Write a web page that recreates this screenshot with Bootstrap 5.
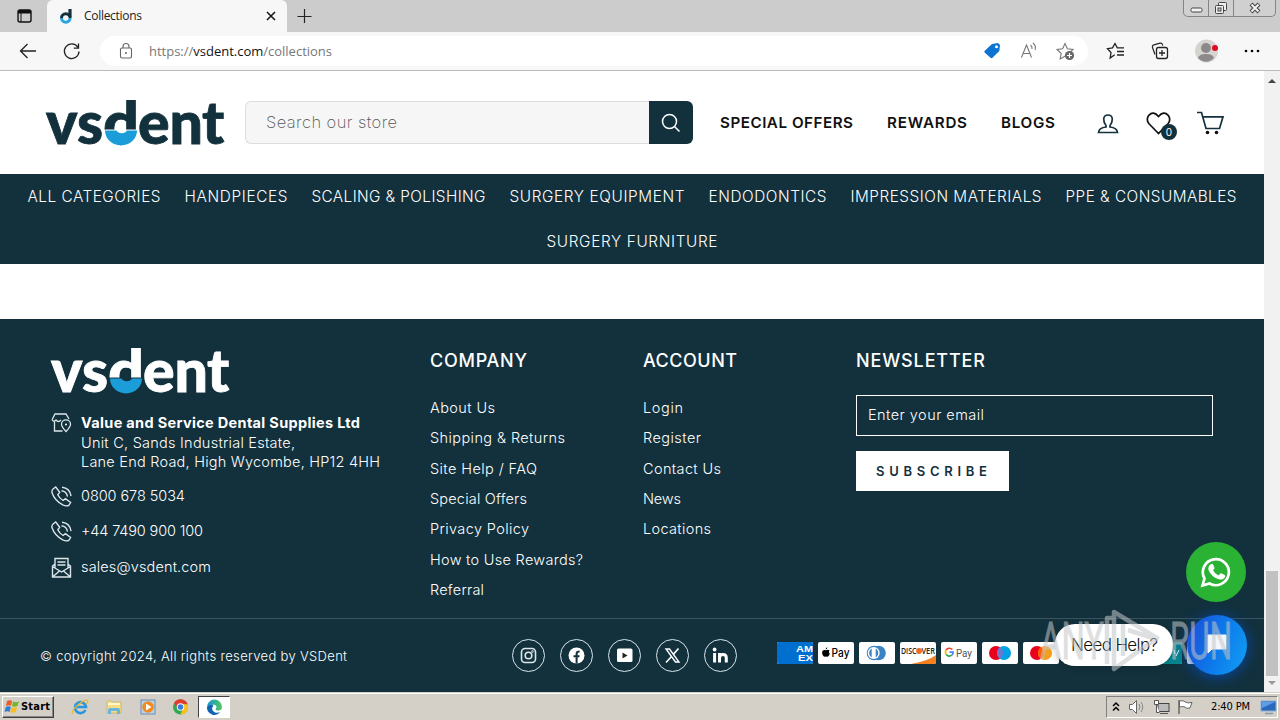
<!DOCTYPE html>
<html lang="en">
<head>
    <meta charset="UTF-8">
    <meta name="viewport" content="width=device-width, initial-scale=1.0">
    <link href="https://cdn.jsdelivr.net/npm/bootstrap@5.3.0/dist/css/bootstrap.min.css" rel="stylesheet">
    <title>Collections</title>
    <style>
        :root { --navy: #12313d; --sky: #1b9dd9; }
        body { width: 1280px; height: 720px; overflow: hidden; font-family: Inter, sans-serif; font-size: 14.5px; line-height: 20px; color: #111; }
        svg { display: block; flex: none; }
        a { color: inherit; text-decoration: none; }
        .fit { white-space: nowrap; display: inline-block; flex: none; }
        .ui { font-family: "Open Sans", "Noto Sans", sans-serif; }

        /* browser frame */
        .tab-strip { height: 32px; background: #ccc; padding-left: 16px; }
        .browser-tab { width: 240px; height: 32px; background: #f7f7f7; border-radius: 6px 6px 0 0; margin-left: 15px; padding: 0 10px 0 12px; font-size: 12px; color: #222; }
        .win-buttons { width: 93px; height: 17px; margin-right: 4px; border: 1px solid #858585; border-top: 0; border-radius: 0 0 5px 5px; background: #d0d0d0; }
        .win-buttons > div { border-right: 1px solid #858585; }
        .win-buttons > div:last-child { border: 0; }
        .tool-row { height: 39px; background: #f7f7f7; border-bottom: 1px solid #bbb; padding-left: 19px; }
        .address { width: 988px; height: 30px; background: #fff; border-radius: 15px; margin-left: 19px; padding: 0 13px 0 18px; font-size: 13px; color: #777; }
        .address b { font-weight: 400; color: #111; }

        /* store */
        .viewport-area { height: 621px; }
        .store { width: 1264px; }
        .store-header { height: 103px; padding-left: 45px; background: #fff; }
        .search { width: 448px; height: 43px; margin-left: 19px; }
        .search-field { background: #f6f6f6; border: 1px solid #ddd; border-right: 0; border-radius: 6px 0 0 6px; padding: 0 0 2px 20px; font-size: 16.5px; font-weight: 200; color: #555; }
        .search-btn { width: 44px; background: var(--navy); border-radius: 0 6px 6px 0; }
        .top-links { margin-left: 27px; gap: 34px; font-size: 15.2px; font-weight: 600; }
        .wish-count { width: 16px; height: 16px; right: -6px; bottom: -5px; background: var(--navy); color: #fff; font-size: 10px; line-height: 16px; text-align: center; border-radius: 50%; }
        .category-bar { height: 90px; background: var(--navy); color: #fff; column-gap: 24px; font-size: 15.3px; font-weight: 300; align-content: flex-start; }
        .category-bar a { line-height: 45px; height: 45px; }
        .gap-band { height: 55px; background: #fff; }

        .store-footer { height: 373px; background: var(--navy); color: #fff; font-weight: 300; }
        .footer-main { height: 300px; padding: 29px 51px 0 50px; border-bottom: 1px solid #3b5560; }
        .col-contact { width: 380px; }
        .col-links { width: 213px; }
        .col-links h2, .col-news h2 { font-size: 18px; font-weight: 500; line-height: 24px; margin: 1px 0 22px; }
        .col-links ul li { height: 30.35px; line-height: 26px; }
        .col-news { width: 357px; }
        .email-box { height: 41px; border: 1px solid #fff; padding: 0 11px 2px; }
        .subscribe { width: 153px; height: 40px; margin-top: 15px; background: #fff; color: var(--navy); font-size: 13px; font-weight: 600; padding-left: 20px; }
        .contact-row { gap: 10px; }
        .contact-row > svg { margin-left: 1px; margin-right: -1px; }
        .contact-row b { font-weight: 700; }
        .footer-base { height: 73px; padding-left: 40px; font-size: 13px; }
        .social { gap: 15px; margin-left: 165px; }
        .social a { width: 33px; height: 33px; border: 1px solid #dbe5e9; border-radius: 50%; }
        .payments { gap: 5px; margin-left: 40px; margin-top: -5px; }
        .payments svg { width: 36px; height: 22px; border-radius: 2px; background: #fff; }

        .scroll-rail { width: 16px; background: #f1f1f1; padding: 7px 2px 6px; }
        .scroll-thumb { width: 12px; height: 105px; background: #c1c1c1; margin-top: auto; margin-bottom: 5px; }

        /* floating help */
        .wa-button { left: 1186px; top: 542px; width: 60px; height: 60px; background: #2ab234; }
        .chat-button { left: 1187px; top: 615px; width: 60px; height: 60px; background: linear-gradient(110deg, #1d4ed8 5%, #0c78ea 50%, #12a0f4); box-shadow: 0 2px 14px #0848ad; }
        .help-pill { left: 1055px; top: 624px; width: 118px; height: 42px; background: #fff; color: #111; border-radius: 20px; padding-left: 16px; font-size: 17px; font-weight: 300; box-shadow: 0 1px 8px rgba(0,0,0,.2); }
        .watermark { left: 1036px; top: 600px; }

        /* taskbar */
        .taskbar { height: 28px; background: #d4d0c8; border-top: 1px solid #d4d0c8; box-shadow: inset 0 1px #fff; padding: 1px 2px 0; font-family: "DejaVu Sans Condensed", "DejaVu Sans", sans-serif; font-size: 11px; color: #000; }
        .start-btn { width: 52px; height: 22px; border: 1px solid; border-color: #fff #404040 #404040 #fff; box-shadow: inset -1px -1px #888; padding-left: 1px; font-weight: 700; }
        .task-icons { margin-left: 17px; gap: 15.8px; }
        .task-active { width: 32px; height: 22px; margin-left: 9px; background: #fff; border: 1px solid; border-color: #404040 #fff #fff #404040; }
        .tray { width: 172px; height: 22px; border: 1px solid; border-color: #808080 #fff #fff #808080; padding: 0 0 0 5px; }
    </style>
</head>
<body class="d-flex flex-column position-relative">
    <!-- tabs -->
    <div class="tab-strip d-flex align-items-center ui">
        <svg width="16" height="16" viewBox="0 0 16 16"><rect x="2" y="2" width="13" height="12" rx="2" fill="none" stroke="#111" stroke-width="1.4"/><path d="M2 2h13v3.5H2z" fill="#111"/><path d="M5 5v9" stroke="#111"/></svg>
        <div class="browser-tab d-flex align-items-center">
            <svg width="14" height="16" viewBox="0 0 14 16"><path d="M11 1v8" stroke="#14313d" stroke-width="3.2"/><path d="M2.5 10a4.3 4.3 0 0 1 8.6 0" fill="none" stroke="#14313d" stroke-width="3"/><path d="M2.5 10a4.3 4.3 0 0 0 8.6 0" fill="none" stroke="#27a5de" stroke-width="3"/></svg>
            <span class="fit" data-w="58" style="margin-left:11px">Collections</span>
            <svg class="ms-auto" width="12" height="12" viewBox="0 0 12 12"><path d="M2 2l8 8M10 2l-8 8" stroke="#111" stroke-width="1.5"/></svg>
        </div>
        <svg class="ms-2" width="18" height="18" viewBox="0 0 18 18"><path d="M9.500 2v14M2.500 9.500h14" stroke="#222" stroke-width="1.2"/></svg>
        <div class="win-buttons d-flex ms-auto align-self-start">
            <div style="width:25px"><svg width="24" height="16"><rect x="7" y="8" width="11" height="4" rx="1.500" fill="#f2f2f2" stroke="#444"/></svg></div>
            <div style="width:25px"><svg width="24" height="16"><rect x="9.500" y="2.500" width="8" height="8" rx="1" fill="#eee" stroke="#444"/><rect x="6.500" y="5.500" width="8" height="8" rx="1" fill="#eee" stroke="#444"/><rect x="9" y="8" width="3" height="3" fill="#ccc" stroke="#444"/></svg></div>
            <div><svg width="40" height="16"><path d="M17 4l8 8M25 4l-8 8" stroke="#444" stroke-width="4"/><path d="M17.500 4.500l7 7M24.500 4.500l-7 7" stroke="#f2f2f2" stroke-width="2"/></svg></div>
        </div>
    </div>

    <!-- address row -->
    <div class="tool-row d-flex align-items-center ui">
        <svg width="18" height="18" viewBox="0 0 18 18"><path d="M17 9H1.500M8.500 2l-7 7 7 7" fill="none" stroke="#222" stroke-width="1.300"/></svg>
        <svg style="margin-left:25px" width="19" height="19" viewBox="0 0 19 19"><path d="M15.800 5.200A7.300 7.300 0 1 0 17 9.500M16.500 1.500v4.700h-4.700" fill="none" stroke="#222" stroke-width="1.300"/></svg>
        <div class="address d-flex align-items-center">
            <svg width="16" height="18" viewBox="0 0 16 18"><rect x="2.500" y="6" width="11" height="10" rx="1.500" fill="none" stroke="#666" stroke-width="1.100"/><path d="M5 6V4.500a3 3 0 0 1 6 0V6" fill="none" stroke="#666" stroke-width="1.100"/><circle cx="8" cy="11" r="1" fill="#666"/></svg>
            <span class="fit" data-w="183" style="margin-left:15px">https://<b>vsdent.com</b>/collections</span>
            <svg class="ms-auto" width="18" height="18" viewBox="0 0 18 18"><path d="M2 8.500l7-6.500 6-1 2 2-.7 6-6.800 6.800q-1 .8-2 0L1.700 10.500q-.7-1 .3-2z" fill="#0b73d2"/><circle cx="13.500" cy="4.700" r="1.500" fill="#fff"/></svg>
            <svg style="margin-left:19px" width="18" height="18" viewBox="0 0 18 18"><path d="M1.500 15.500L6.500 3l5 12.500M3.200 11.500h6.600M10.500 3q2 1.500 1.500 4M13 1q3.500 3 2 7" fill="none" stroke="#777" stroke-width="1.100"/></svg>
            <svg style="margin-left:18px" width="19" height="19" viewBox="0 0 19 19"><path d="M9 14.300L4.200 17l1-5.500L1 7.500l5.600-.8L9 1.500l2.400 5.200 5.600.8-2 2" fill="none" stroke="#777" stroke-width="1.100"/><circle cx="13.500" cy="13.500" r="4.600" fill="#666"/><path d="M13.500 11v5M11 13.500h5" stroke="#fff" stroke-width="1.200"/></svg>
        </div>
        <svg style="margin-left:18px" width="19" height="18" viewBox="0 0 19 18"><path d="M8.700 12.800L4.200 16l.8-5.500L1.500 6.600l5-.7L9 1.500l2.300 4.400H18M11 9.500h7M11 13h7" fill="none" stroke="#222" stroke-width="1.300"/></svg>
        <svg style="margin-left:26px" width="18" height="18" viewBox="0 0 18 18"><path d="M4 12.500L1.500 5.500Q1 3.500 3 2.800l6-1.600q2-.4 2.500 1.500l.3 1" fill="none" stroke="#222" stroke-width="1.200"/><rect x="5.500" y="5.500" width="11" height="11" rx="2" fill="#f7f7f7" stroke="#222" stroke-width="1.300"/><path d="M11 8v6M8 11h6" stroke="#222" stroke-width="1.300"/></svg>
        <svg style="margin-left:26px" width="24" height="24" viewBox="0 0 24 24"><circle cx="11.500" cy="12" r="11.500" fill="#d6d4d0"/><circle cx="11" cy="9" r="5" fill="#8d898a"/><path d="M3 19q1-4 8-4t8 4q-8 7.500-16 0z" fill="#8d898a"/><circle cx="20" cy="9" r="3" fill="#e00b1c"/></svg>
        <svg style="margin-left:25px" width="16" height="4" viewBox="0 0 16 4"><circle cx="2" cy="2" r="1.300"/><circle cx="8" cy="2" r="1.300"/><circle cx="14" cy="2" r="1.300"/></svg>
    </div>

    <!-- shared symbols -->
    <svg width="0" height="0" class="position-absolute">
        <defs>
            <clipPath id="upper"><path d="M0 0h180v29.500H0z"/></clipPath>
            <symbol id="logo" viewBox="0 0 180 46">
                <g font-family="Lato, sans-serif" font-weight="900" font-size="59" fill="currentColor" stroke="currentColor" stroke-width=".8">
                    <text x="1 32" y="44">vs</text>
                    <text x="58" y="44" textLength="36" lengthAdjust="spacingAndGlyphs" clip-path="url(#upper)">d</text>
                    <text x="93 124.500 157" y="44">ent</text>
                </g>
                <path d="M60 30.500H71.500a5.800 4.800 0 0 0 10.500 0H92A16 15 0 0 1 60 30.500z" fill="#1b9dd9"/>
            </symbol>
            <symbol id="phone" viewBox="0 0 20 20">
                <path d="M2.200 2.600L4.500 1l3.800 5-1.800 2.300q1.500 3.400 5 5.500l2.200-1.800 5 3.700-1.500 2.500q-2.200 1.600-6-.2Q3.500 14 1 6.500q-.6-2.500 1.200-3.900zM10 4.500q5 .5 5.700 5.700M10.500 1.200q7.500.8 8.600 8.500" fill="none" stroke="#dce6ea" stroke-width="1.300"/>
            </symbol>
        </defs>
    </svg>

    <div class="viewport-area d-flex">
        <div class="store">
            <header class="store-header d-flex align-items-center">
                <svg width="180" height="46" style="color:#12313d"><use href="#logo"/></svg>
                <div class="search d-flex" style="margin-left:20px">
                    <div class="search-field flex-grow-1 d-flex align-items-center"><span class="fit" data-w="131">Search our store</span></div>
                    <div class="search-btn d-flex align-items-center justify-content-center">
                        <svg width="20" height="20" viewBox="0 0 20 20"><circle cx="8.500" cy="8.500" r="7" fill="none" stroke="#fff" stroke-width="1.500"/><path d="M13.500 13.500l5 5" stroke="#fff" stroke-width="1.500"/></svg>
                    </div>
                </div>
                <nav class="top-links d-flex">
                    <a href="#" class="fit" data-w="133">SPECIAL OFFERS</a>
                    <a href="#" class="fit" data-w="80">REWARDS</a>
                    <a href="#" class="fit" data-w="54">BLOGS</a>
                </nav>
                <svg style="margin-left:42px" width="22" height="22" viewBox="0 0 22 22"><path d="M9 13.500Q6.700 11 6.700 7 7 3 11 3t4.300 4q0 4-2.300 6.500v1.500q7 .8 7.500 5.500h-19q.5-4.700 7.500-5.500z" fill="none" stroke="#14313d" stroke-width="1.700"/></svg>
                <div class="position-relative" style="margin-left:27px">
                    <svg width="25" height="24" viewBox="0 0 25 24"><path d="M12.500 22.500L3 12.800Q-.3 8.500 2.800 4.300 7.500-.5 12.500 5.500 17.500-.5 22.200 4.300q3.100 4.200-.2 8.500z" fill="none" stroke="#111" stroke-width="1.700"/></svg>
                    <span class="wish-count position-absolute">0</span>
                </div>
                <svg style="margin-left:25px" width="28" height="26" viewBox="0 0 28 26"><path d="M1 2.500h4.500L10 18.500h13.500L27 6.800H6.800" fill="none" stroke="#14313d" stroke-width="1.700"/><circle cx="11.500" cy="22.500" r="1.800" fill="#111"/><circle cx="20.500" cy="22.500" r="1.800" fill="#111"/></svg>
            </header>

            <nav class="category-bar d-flex flex-wrap justify-content-center">
                <a href="#" class="fit" data-w="133">ALL CATEGORIES</a>
                <a href="#" class="fit" data-w="103">HANDPIECES</a>
                <a href="#" class="fit" data-w="174">SCALING &amp; POLISHING</a>
                <a href="#" class="fit" data-w="175">SURGERY EQUIPMENT</a>
                <a href="#" class="fit" data-w="118">ENDODONTICS</a>
                <a href="#" class="fit" data-w="191">IMPRESSION MATERIALS</a>
                <a href="#" class="fit" data-w="171">PPE &amp; CONSUMABLES</a>
                <a href="#" class="fit" data-w="171">SURGERY FURNITURE</a>
            </nav>
            <div class="gap-band"></div>

            <footer class="store-footer">
                <div class="footer-main d-flex">
                    <div class="col-contact">
                        <svg width="180" height="46"><use href="#logo"/></svg>
                        <div class="contact-row d-flex" style="margin-top:19px">
                            <svg width="21" height="20" viewBox="0 0 21 20"><path d="M3.500 8.500V18h8M1.200 6.500L4 1h11l3 5M1 6.500q1.500 3.200 4 .5 2.300 3 5 0" fill="none" stroke="#dce6ea" stroke-width="1.300"/><path d="M15 18.500q-4.500-5-4.500-7.300a4.500 4.300 0 0 1 9 0q0 2.300-4.500 7.300z" fill="none" stroke="#dce6ea" stroke-width="1.300"/><circle cx="15" cy="11.500" r="1" fill="#fff"/></svg>
                            <div style="line-height:19.500px">
                                <b class="fit" data-w="279">Value and Service Dental Supplies Ltd</b><br>
                                <span class="fit" data-w="214">Unit C, Sands Industrial Estate,</span><br>
                                <span class="fit" data-w="299">Lane End Road, High Wycombe, HP12 4HH</span>
                            </div>
                        </div>
                        <div class="contact-row d-flex" style="margin-top:14px"><svg width="21" height="21"><use href="#phone"/></svg><span class="fit" data-w="104">0800 678 5034</span></div>
                        <div class="contact-row d-flex" style="margin-top:14px"><svg width="21" height="21"><use href="#phone"/></svg><span class="fit" data-w="122">+44 7490 900 100</span></div>
                        <div class="contact-row d-flex" style="margin-top:15px"><svg width="21" height="21" viewBox="0 0 21 21"><path d="M4 7L1.500 9v11h18V9L17 7M4 11.500V1.500h13v10M6.500 5h8M6.500 8h8M1.500 9.500l9 5.500 9-5.500M1.500 20l7-6M19.500 20l-7-6" fill="none" stroke="#dce6ea" stroke-width="1.400"/></svg><span class="fit" data-w="130">sales@vsdent.com</span></div>
                    </div>
                    <div class="col-links">
                        <h2><span class="fit" data-w="97">COMPANY</span></h2>
                        <ul class="list-unstyled">
                            <li><a href="#" class="fit" data-w="65">About Us</a></li>
                            <li><a href="#" class="fit" data-w="135">Shipping &amp; Returns</a></li>
                            <li><a href="#" class="fit" data-w="107">Site Help / FAQ</a></li>
                            <li><a href="#" class="fit" data-w="97">Special Offers</a></li>
                            <li><a href="#" class="fit" data-w="99">Privacy Policy</a></li>
                            <li><a href="#" class="fit" data-w="153">How to Use Rewards?</a></li>
                            <li><a href="#" class="fit" data-w="54">Referral</a></li>
                        </ul>
                    </div>
                    <div class="col-links">
                        <h2><span class="fit" data-w="94">ACCOUNT</span></h2>
                        <ul class="list-unstyled">
                            <li><a href="#" class="fit" data-w="40">Login</a></li>
                            <li><a href="#" class="fit" data-w="58">Register</a></li>
                            <li><a href="#" class="fit" data-w="78">Contact Us</a></li>
                            <li><a href="#" class="fit" data-w="38">News</a></li>
                            <li><a href="#" class="fit" data-w="68">Locations</a></li>
                        </ul>
                    </div>
                    <div class="col-news">
                        <h2><span class="fit" data-w="129">NEWSLETTER</span></h2>
                        <div class="email-box d-flex align-items-center"><span class="fit" data-w="116">Enter your email</span></div>
                        <div class="subscribe d-flex align-items-center"><span class="fit" data-w="111">SUBSCRIBE</span></div>
                    </div>
                </div>
                <div class="footer-base d-flex align-items-center">
                    <span class="fit" data-w="307">© copyright 2024, All rights reserved by VSDent</span>
                    <div class="social d-flex">
                        <a href="#" class="d-flex align-items-center justify-content-center"><svg width="17" height="17" viewBox="0 0 17 17" fill="none" stroke="#dce6ea" stroke-width="1.600"><rect x="1.500" y="1.500" width="14" height="14" rx="3.500"/><circle cx="8.500" cy="8.500" r="3.300"/><circle cx="12.500" cy="4.500" r=".4"/></svg></a>
                        <a href="#" class="d-flex align-items-center justify-content-center"><svg width="17" height="17" viewBox="0 0 17 17"><circle cx="8.500" cy="8.500" r="8" fill="#fff"/><path d="M8.600 16.500V6.800q0-2.300 3-2.300M5.500 9.300h6" fill="none" stroke="#14313d" stroke-width="2"/></svg></a>
                        <a href="#" class="d-flex align-items-center justify-content-center"><svg width="17" height="17" viewBox="0 0 17 17"><rect x="1" y="1.500" width="15.500" height="13.500" rx="1.500" fill="#fff"/><path d="M6.500 5.500l5 3-5 3z" fill="#222"/></svg></a>
                        <a href="#" class="d-flex align-items-center justify-content-center"><svg width="17" height="17" viewBox="0 0 17 17" fill="none" stroke="#fff"><path d="M2 2h3.500l9.500 13h-3.500z" stroke-width="1.400"/><path d="M14.500 1.500L9.300 7.400M7.500 9.500L2 15.500" stroke-width="1.600"/></svg></a>
                        <a href="#" class="d-flex align-items-center justify-content-center"><svg width="17" height="17" viewBox="0 0 17 17"><circle cx="2.600" cy="2.500" r="1.900" fill="#fff"/><path d="M2.600 6v9.500M7.500 6v9.500M7.500 11q0-3.500 3.500-3.500 3.300 0 3.300 3.500v4.500" fill="none" stroke="#fff" stroke-width="3"/></svg></a>
                    </div>
                    <div class="payments d-flex">
                        <svg viewBox="0 0 36 22"><path d="M0 0h36v22H0z" fill="#016fd0"/><g font-family="Liberation Sans, sans-serif" font-weight="700" font-size="9" fill="#fff"><text x="19" y="10" textLength="17" lengthAdjust="spacingAndGlyphs">AM</text><text x="21" y="18.500" textLength="15" lengthAdjust="spacingAndGlyphs">EX</text></g></svg>
                        <svg viewBox="0 0 36 22"><path d="M8 8.300q2-1.300 3.500.3-1.600 1.400.3 3.200-1.200 3.400-2.700 2.900-1-.4-2 0-1.400.4-2.700-2.200Q3.500 9 5.500 8.200q1.200-.5 2.500.1zM7.600 7.500q.1-1.800 1.800-2.200 0 1.800-1.800 2.200z"/><text x="13.500" y="14.800" font-family="Inter, sans-serif" font-size="11.500" font-weight="500" textLength="18" lengthAdjust="spacingAndGlyphs">Pay</text></svg>
                        <svg viewBox="0 0 36 22"><circle cx="19.500" cy="11" r="7.300" fill="#3a83c5"/><circle cx="15" cy="11" r="7.300" fill="#3a83c5"/><circle cx="14.700" cy="11" r="6" fill="#fff"/><path d="M12.700 6.500a5.200 5.200 0 0 0 0 9zM16.700 6.500a5.200 5.200 0 0 1 0 9z" fill="#3a83c5"/></svg>
                        <svg viewBox="0 0 36 22"><path d="M36 13v9H11q17-3 25-9z" fill="#f48120"/><g font-family="Open Sans, sans-serif" font-weight="600" font-size="8" fill="#222"><text x="1" y="11.800" textLength="15.500" lengthAdjust="spacingAndGlyphs">DISC</text><text x="21.500" y="11.800" textLength="13.500" lengthAdjust="spacingAndGlyphs">VER</text></g><circle cx="19" cy="9" r="2.900" fill="#f06a1f"/></svg>
                        <svg viewBox="0 0 36 22"><g fill="none" stroke-width="1.700"><path d="M11.300 7.500A3.900 3.900 0 0 0 5.200 8" stroke="#ea4335"/><path d="M5.200 8a3.900 3.900 0 0 0 0 4.500" stroke="#fbbc04"/><path d="M5.200 12.500a3.900 3.900 0 0 0 5.600.7" stroke="#34a853"/><path d="M10.800 13.200q1.500-1.300 1.300-3H8.500" stroke="#4285f4"/></g><text x="15" y="14.800" font-family="Roboto, sans-serif" font-size="11.500" font-weight="400" fill="#555" textLength="16" lengthAdjust="spacingAndGlyphs">Pay</text></svg>
                        <svg viewBox="0 0 36 22"><circle cx="14" cy="11" r="7" fill="#eb001b"/><circle cx="22" cy="11" r="7" fill="#00a2e5"/><path d="M18 5.300a7 7 0 0 1 0 11.400 7 7 0 0 1 0-11.400z" fill="#7375cf"/></svg>
                        <svg viewBox="0 0 36 22"><circle cx="14" cy="11" r="7" fill="#eb001b"/><circle cx="22" cy="11" r="7" fill="#f79e1b"/><path d="M18 5.300a7 7 0 0 1 0 11.400 7 7 0 0 1 0-11.400z" fill="#ff5f00"/></svg>
                        <svg viewBox="0 0 36 22"></svg>
                        <svg viewBox="0 0 36 22"></svg>
                        <svg viewBox="0 0 36 22"><path d="M0 0h36v22H0z" fill="#07868e"/><path d="M28 8l1 4M33 8l-3 6" stroke="#fff"/></svg>
                        <svg viewBox="0 0 36 22"></svg>
                    </div>
                </div>
            </footer>
        </div>
        <div class="scroll-rail d-flex flex-column align-items-center">
            <svg width="10" height="5"><path d="M1 5l4-4 4 4z" fill="#444"/></svg>
            <div class="scroll-thumb"></div>
            <svg width="10" height="5"><path d="M1 0l4 4 4-4z" fill="#999"/></svg>
        </div>
    </div>

    <div class="taskbar d-flex align-items-center">
        <div class="start-btn d-flex align-items-center">
            <svg width="16" height="16" viewBox="0 0 16 16"><path d="M3 2q3-1.500 5 0L7 7Q5 5.500 2 7z" fill="#ee5b2c"/><path d="M9 2.500q3 1.500 6 0L13.500 7q-3 1.500-5.500 0z" fill="#74b72b"/><path d="M1.800 8q3-1.500 5 0L5.500 13q-2-1.500-5 0z" fill="#2f7fd4"/><path d="M7.700 8q3 1.500 5.500 0l-1.500 5q-3 1.500-5.500 0z" fill="#f8bd20"/></svg>
            <span class="fit" data-w="29" style="margin-left:1px">Start</span>
        </div>
        <div class="task-icons d-flex align-items-center">
            <svg width="18" height="18" viewBox="0 0 18 18"><path d="M14.500 12a5.500 5.500 0 1 1 .5-3H5" fill="none" stroke="#2c96dd" stroke-width="2.600"/><path d="M2 15.500q-3-1.500 4.500-8T16.500 2.500q1 1-1 3.500" fill="none" stroke="#e9b830" stroke-width="1.300"/></svg>
            <svg width="18" height="18" viewBox="0 0 18 18"><path d="M2 4l3-2 2 2h9v11H2z" fill="#f4df88" stroke="#c8ad55" stroke-width=".7"/><path d="M3 6h12" stroke="#fff8cf" stroke-width="2"/><path d="M3 16v-4q0-2 2-2h8q2 0 2 2v4h-3v-3H6v3z" fill="#69b5dd"/></svg>
            <svg width="18" height="18" viewBox="0 0 18 18"><rect x="2" y="2" width="14" height="14" fill="#b9d3e9" stroke="#688caf"/><circle cx="9" cy="9" r="5.800" fill="#f28a1d"/><path d="M7 5.500l5.500 3.500L7 12.500z" fill="#fff"/></svg>
            <svg width="17" height="18" viewBox="0 0 18 18"><circle cx="9" cy="9" r="8" fill="#33a853"/><path d="M2 5a8 8 0 0 1 14.500 1H9l-3 4z" fill="#e33b2e"/><path d="M16.500 6A8 8 0 0 1 9 17l3.500-8L9 6z" fill="#fbc116"/><circle cx="9" cy="9" r="4" fill="#fff"/><circle cx="9" cy="9" r="3" fill="#3a7de0"/></svg>
        </div>
        <div class="task-active d-flex align-items-center justify-content-center">
            <svg width="17" height="17" viewBox="0 0 17 17"><defs><linearGradient id="edge"><stop stop-color="#1b8fd8"/><stop offset="1" stop-color="#51ca5c"/></linearGradient></defs><path d="M1 8A7.500 7.500 0 0 1 16 8q0 3.500-4 3.500-2.500 0-2.500-1.200Q12 7 8.500 5.800 4 5 1 8z" fill="url(#edge)"/><path d="M1 8q3-3.500 6.500-1.500Q4 11 9 13.500q3 1 5.500-.7A7.500 7.500 0 0 1 1 8z" fill="#1264b3"/></svg>
        </div>
        <div class="tray d-flex align-items-center ms-auto">
            <svg width="8" height="12" viewBox="0 0 8 12"><path d="M1 5l3-3 3 3M1 9.500l3-3 3 3" fill="none" stroke="#000" stroke-width="1.500"/></svg>
            <svg style="margin-left:8px" width="18" height="16" viewBox="0 0 18 16"><path d="M1.500 5.500h3l4-4v13l-4-4h-3z" fill="#fff" stroke="#666"/><path d="M11 5q2 3 0 6M13 3q3.500 5 0 10" fill="none" stroke="#888"/></svg>
            <svg style="margin-left:7px" width="17" height="16" viewBox="0 0 17 16"><rect x="5" y="4.500" width="11" height="8" fill="#bbb" stroke="#444"/><path d="M1.500 1.500h4v4h-4zM3.500 5.500v8h3M7 14.500h8" fill="#fff" stroke="#555"/></svg>
            <svg style="margin-left:7px" width="17" height="16" viewBox="0 0 17 16"><path d="M2 1v14" stroke="#555" stroke-width="1.300"/><path d="M2.500 2q4-1 6 1 2 1.500 6.500.5L13 9Q9 10 8 8 6 7 2.500 8z" fill="#fff" stroke="#666"/></svg>
            <span class="fit ms-auto" data-w="39">2:40 PM</span>
            <svg style="margin-left:10px" width="17" height="16" viewBox="0 0 17 16"><rect x="1" y="2" width="15" height="10" fill="#2869be" stroke="#8daed4"/><path d="M2 3h13L2 9z" fill="#5d9de3"/><path d="M5 14.500h8" stroke="#89a" stroke-width="1.500"/></svg>
        </div>
    </div>

    <!-- floating buttons -->
    <div class="wa-button position-absolute rounded-circle d-flex align-items-center justify-content-center">
        <svg width="32" height="32" viewBox="0 0 32 32"><path d="M2.500 29.500l2-7A13 13 0 1 1 9.500 27.500z" fill="none" stroke="#fff" stroke-width="2.700"/><path d="M10.500 8.500q1.800-1.500 2.700.2l1.300 3q.2 1-1.500 2.500 2 3.700 5.600 5.300l1.700-2q.6-.5 1.500-.1l3 1.600q1 .8-.3 3-2.500 2.600-6.500 1-6.800-2.500-9.500-9-.8-3.500 2-5.500z" fill="#fff"/></svg>
    </div>
    <div class="help-pill position-absolute d-flex align-items-center"><span class="fit" data-w="87">Need Help?</span></div>
    <div class="chat-button position-absolute rounded-circle d-flex align-items-center justify-content-center">
        <svg style="margin-top:-3px" width="20" height="20" viewBox="0 0 20 20"><path d="M1 1h18v14H5l-4 4z" fill="#f3f6fa" stroke="#f3f6fa" stroke-linejoin="round"/></svg>
    </div>
    <svg class="watermark position-absolute" width="210" height="80" viewBox="0 -6 210 80" opacity=".55">
        <g font-family="Roboto, sans-serif" font-weight="400" font-size="51" fill="#c4c6c8" stroke="#c4c6c8" stroke-width=".8">
            <text x="4" y="53" textLength="64" lengthAdjust="spacingAndGlyphs">ANY</text>
            <text x="134" y="53" textLength="62" lengthAdjust="spacingAndGlyphs">RUN</text>
        </g>
        <path d="M78 6l43 26-43 31V6zM87 18v32M92 24l28 9-27 19M76 12h-5v46" fill="none" stroke="#c4c6c8" stroke-width="4.500" stroke-linejoin="round"/>
    </svg>

    <script>
        // Track every label so that it fills its set width
        document.querySelectorAll('.fit').forEach(label => {
            const gaps = label.textContent.length - 1;
            const space = (label.dataset.w - label.getBoundingClientRect().width) / gaps;
            label.style.letterSpacing = space + 'px';
            label.style.marginRight = -space + 'px';
        });
    </script>
</body>
</html>
